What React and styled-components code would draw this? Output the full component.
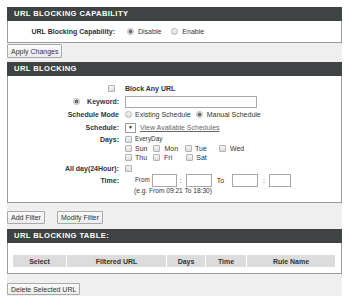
import React from "react";
import styled, { createGlobalStyle } from "styled-components";

const GlobalStyle = createGlobalStyle`
  html, body { margin: 0; padding: 0; background: #ffffff; }
  body { font-family: "Liberation Sans", Arial, sans-serif; }
  * { box-sizing: border-box; }
`;

const Page = styled.div`
  margin: 7px 0 0 7px;
  width: 335px;
  height: 289px;
  background: #efefef;
  color: #333;
  font-size: 7px;
  line-height: 1;
`;

const Panel = styled.section`
  background: #fff;
  border: 1px solid #9c9c9c;
  border-top: none;
  margin-top: ${(p) => p.$mt || 0}px;
`;

const PanelHeader = styled.div`
  height: 14px;
  line-height: 14px;
  margin: 0 -1px;
  padding-left: 7px;
  background: #404343;
  color: #fff;
  font-weight: bold;
  font-size: 7.6px;
  letter-spacing: 0.4px;
`;

const CapRow = styled.div`
  height: 21px;
  display: flex;
  align-items: center;
`;

const CapLabel = styled.span`
  width: 107px;
  text-align: right;
  font-weight: bold;
  margin-right: 12px;
`;

const Radio = styled.span`
  display: inline-block;
  flex: none;
  width: 7px;
  height: 7px;
  border-radius: 50%;
  border: 1px solid #b5b5b5;
  background: ${(p) =>
    p.$on
      ? "radial-gradient(circle, #6a6a6a 0 1.6px, #e9e9e9 2.2px)"
      : "linear-gradient(#f4f4f4, #dedede)"};
  margin-right: ${(p) => p.$mr ?? 4}px;
`;

const Check = styled.span`
  display: inline-block;
  flex: none;
  width: 7px;
  height: 7px;
  border: 1px solid #b3b3b3;
  border-radius: 1px;
  background: linear-gradient(#f6f6f6, #dcdcdc);
  margin-right: ${(p) => p.$mr ?? 4}px;
`;

const Opt = styled.span`
  margin-right: ${(p) => p.$mr ?? 0}px;
`;

const Spacer = styled.span`
  display: inline-block;
  width: ${(p) => p.$w}px;
`;

const Button = styled.button`
  display: inline-block;
  height: ${(p) => p.$h || 13}px;
  padding: 0 3px;
  margin: 0;
  margin-right: ${(p) => p.$mr || 0}px;
  border: 1px solid #a9a9a9;
  border-radius: 1px;
  background: linear-gradient(#fafafa, #ececec);
  color: #333;
  font-family: "Liberation Sans", Arial, sans-serif;
  font-size: 7px;
  line-height: 1;
`;

const ButtonBar = styled.div`
  display: flex;
  margin-top: ${(p) => p.$mt || 0}px;
`;

const FormGrid = styled.div`
  display: grid;
  grid-template-columns: 111px 1fr;
  column-gap: 6px;
  padding: 6px 0 6px;
`;

const Label = styled.div`
  display: flex;
  align-items: center;
  justify-content: flex-end;
  height: ${(p) => p.$h || 13}px;
  font-weight: bold;
  padding-right: ${(p) => p.$pr ?? 0}px;
  align-self: start;
`;

const Control = styled.div`
  display: flex;
  align-items: center;
  height: ${(p) => p.$h || 13}px;
  font-weight: ${(p) => (p.$bold ? "bold" : "normal")};
`;

const TextInput = styled.span`
  display: inline-block;
  width: ${(p) => p.$w}px;
  height: ${(p) => p.$h || 12}px;
  border: 1px solid #a8a8a8;
  background: #fff;
  margin-right: ${(p) => p.$mr || 0}px;
`;

const Select = styled.span`
  display: inline-flex;
  align-items: center;
  justify-content: center;
  width: 11px;
  height: 10px;
  border: 1px solid #9a9a9a;
  background: #fff;
  font-size: 5px;
  color: #222;
  margin-right: 4px;
`;

const Link = styled.span`
  color: #666;
  text-decoration: underline;
`;

const DaysBlock = styled.div`
  margin-top: 1px;
  display: flex;
  flex-direction: column;
`;

const DayLine = styled.div`
  display: flex;
  align-items: center;
  height: 9px;
`;

const Small = styled.span`
  font-size: 6.3px;
  margin-right: ${(p) => p.$mr || 0}px;
`;

const Example = styled.div`
  grid-column: 2;
  height: 9px;
  display: flex;
  align-items: center;
  padding-left: 9px;
  font-size: 6.6px;
`;

const TableWrap = styled.div`
  padding: 12px 6px 6px 5px;
`;

const Table = styled.div`
  display: grid;
  grid-template-columns: 53px 99px 38px 40px 1fr;
  column-gap: 1px;
`;

const Th = styled.div`
  height: 12px;
  display: flex;
  align-items: center;
  justify-content: center;
  background: #dcdcdc;
  font-weight: bold;
  color: #333;
`;

export default function App() {
  return (
    <>
      <GlobalStyle />
      <Page>
        <Panel>
          <PanelHeader>URL BLOCKING CAPABILITY</PanelHeader>
          <CapRow>
            <CapLabel>URL Blocking Capability:</CapLabel>
            <Radio $on />
            <Opt $mr={10}>Disable</Opt>
            <Radio />
            <Opt>Enable</Opt>
          </CapRow>
        </Panel>
        <ButtonBar $mt={1}>
          <Button $h={14}>Apply Changes</Button>
        </ButtonBar>

        <Panel $mt={4}>
          <PanelHeader>URL BLOCKING</PanelHeader>
          <FormGrid>
            <Label $pr={4}>
              <Check $mr={0} />
            </Label>
            <Control $bold>Block Any URL</Control>

            <Label>
              <Radio $on $mr={7} />
              Keyword:
            </Label>
            <Control>
              <TextInput $w={132} />
            </Control>

            <Label>Schedule Mode</Label>
            <Control>
              <Radio $mr={3} />
              <Opt $mr={5}>Existing Schedule</Opt>
              <Radio $on $mr={4} />
              <Opt>Manual Schedule</Opt>
            </Control>

            <Label>Schedule:</Label>
            <Control>
              <Select>▼</Select>
              <Link>View Available Schedules</Link>
            </Control>

            <Label $h={10}>Days:</Label>
            <DaysBlock>
              <DayLine>
                <Check $mr={3} />
                <Small>EveryDay</Small>
              </DayLine>
              <DayLine>
                <Check $mr={3} />
                <Opt $mr={6}>Sun</Opt>
                <Check $mr={4} />
                <Opt $mr={7}>Mon</Opt>
                <Check $mr={3} />
                <Opt $mr={12}>Tue</Opt>
                <Check $mr={4} />
                <Opt>Wed</Opt>
              </DayLine>
              <DayLine>
                <Check $mr={3} />
                <Opt $mr={6}>Thu</Opt>
                <Check $mr={4} />
                <Opt $mr={14}>Fri</Opt>
                <Check $mr={3} />
                <Opt>Sat</Opt>
              </DayLine>
            </DaysBlock>

            <Label $h={12}>All day(24Hour):</Label>
            <Control $h={12}>
              <Check $mr={0} />
            </Control>

            <Label>Time:</Label>
            <Control>
              <Spacer $w={10} />
              <Small $mr={2}>From</Small>
              <TextInput $w={25} $h={13} $mr={3} />
              <Opt $mr={4}>:</Opt>
              <TextInput $w={26} $h={13} $mr={5} />
              <Opt $mr={8}>To</Opt>
              <TextInput $w={26} $h={13} $mr={5} />
              <Opt $mr={4}>:</Opt>
              <TextInput $w={22} $h={13} />
            </Control>

            <Example>(e.g. From 09:21 To 18:30)</Example>
          </FormGrid>
        </Panel>

        <ButtonBar $mt={8}>
          <Button $mr={12}>Add Filter</Button>
          <Button>Modify Filter</Button>
        </ButtonBar>

        <Panel $mt={5}>
          <PanelHeader>URL BLOCKING TABLE:</PanelHeader>
          <TableWrap>
            <Table>
              <Th>Select</Th>
              <Th>Filtered URL</Th>
              <Th>Days</Th>
              <Th>Time</Th>
              <Th>Rule Name</Th>
            </Table>
          </TableWrap>
        </Panel>

        <ButtonBar $mt={9}>
          <Button $h={12}>Delete Selected URL</Button>
        </ButtonBar>
      </Page>
    </>
  );
}
